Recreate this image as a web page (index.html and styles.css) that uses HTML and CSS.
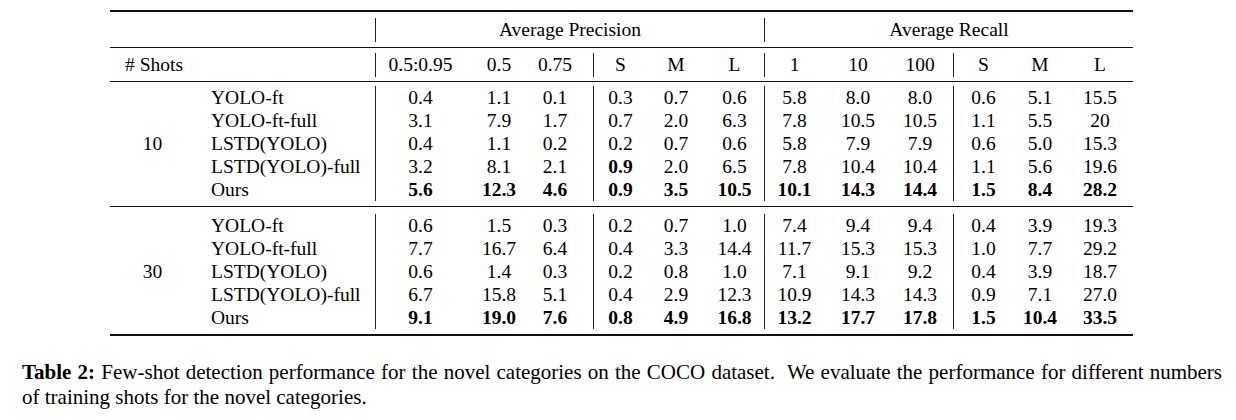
FILE: index.html
```html
<!DOCTYPE html>
<html>
<head>
<meta charset="utf-8">
<link rel="stylesheet" href="styles.css">
</head>
<body>
<table class="tbl">
  <colgroup>
    <col class="w-shot"><col class="w-meth">
    <col class="w90"><col class="w68"><col class="w60">
    <col class="w54"><col class="w58"><col class="w59">
    <col class="w60"><col class="w68"><col class="w61">
    <col class="w60"><col class="w54"><col class="w66">
  </colgroup>
  <tr class="rule thick"><td colspan="14"></td></tr>
  <tr class="sp s6"><td colspan="14"></td></tr>
  <tr class="head">
    <td colspan="2"></td>
    <td colspan="6" class="vl">Average Precision</td>
    <td colspan="6" class="vl">Average Recall</td>
  </tr>
  <tr class="sp s5"><td colspan="14"></td></tr>
  <tr class="rule"><td colspan="14"></td></tr>
  <tr class="sp s5"><td colspan="14"></td></tr>
  <tr class="head">
    <td colspan="2" class="shots">#&nbsp;Shots</td>
    <td class="vl">0.5:0.95</td><td>0.5</td><td class="pr16">0.75</td>
    <td class="vl">S</td><td>M</td><td>L</td>
    <td class="vl">1</td><td>10</td><td class="pr5">100</td>
    <td class="vl">S</td><td>M</td><td>L</td>
  </tr>
  <tr class="sp s4"><td colspan="14"></td></tr>
  <tr class="rule"><td colspan="14"></td></tr>
  <tr class="sp s4"><td colspan="14"></td></tr>

  <tr class="row">
    <td rowspan="5" class="n">10</td><td class="m">YOLO-ft</td>
    <td class="vl">0.4</td><td>1.1</td><td class="pr16">0.1</td>
    <td class="vl">0.3</td><td>0.7</td><td>0.6</td>
    <td class="vl">5.8</td><td>8.0</td><td class="pr5">8.0</td>
    <td class="vl">0.6</td><td>5.1</td><td>15.5</td>
  </tr>
  <tr class="row">
    <td class="m">YOLO-ft-full</td>
    <td class="vl">3.1</td><td>7.9</td><td class="pr16">1.7</td>
    <td class="vl">0.7</td><td>2.0</td><td>6.3</td>
    <td class="vl">7.8</td><td>10.5</td><td class="pr5">10.5</td>
    <td class="vl">1.1</td><td>5.5</td><td>20</td>
  </tr>
  <tr class="row">
    <td class="m">LSTD(YOLO)</td>
    <td class="vl">0.4</td><td>1.1</td><td class="pr16">0.2</td>
    <td class="vl">0.2</td><td>0.7</td><td>0.6</td>
    <td class="vl">5.8</td><td>7.9</td><td class="pr5">7.9</td>
    <td class="vl">0.6</td><td>5.0</td><td>15.3</td>
  </tr>
  <tr class="row">
    <td class="m">LSTD(YOLO)-full</td>
    <td class="vl">3.2</td><td>8.1</td><td class="pr16">2.1</td>
    <td class="vl b">0.9</td><td>2.0</td><td>6.5</td>
    <td class="vl">7.8</td><td>10.4</td><td class="pr5">10.4</td>
    <td class="vl">1.1</td><td>5.6</td><td>19.6</td>
  </tr>
  <tr class="row best">
    <td class="m">Ours</td>
    <td class="vl">5.6</td><td>12.3</td><td class="pr16">4.6</td>
    <td class="vl">0.9</td><td>3.5</td><td>10.5</td>
    <td class="vl">10.1</td><td>14.3</td><td class="pr5">14.4</td>
    <td class="vl">1.5</td><td>8.4</td><td>28.2</td>
  </tr>

  <tr class="sp s5"><td colspan="14"></td></tr>
  <tr class="rule"><td colspan="14"></td></tr>
  <tr class="sp s7"><td colspan="14"></td></tr>

  <tr class="row">
    <td rowspan="5" class="n">30</td><td class="m">YOLO-ft</td>
    <td class="vl">0.6</td><td>1.5</td><td class="pr16">0.3</td>
    <td class="vl">0.2</td><td>0.7</td><td>1.0</td>
    <td class="vl">7.4</td><td>9.4</td><td class="pr5">9.4</td>
    <td class="vl">0.4</td><td>3.9</td><td>19.3</td>
  </tr>
  <tr class="row">
    <td class="m">YOLO-ft-full</td>
    <td class="vl">7.7</td><td>16.7</td><td class="pr16">6.4</td>
    <td class="vl">0.4</td><td>3.3</td><td>14.4</td>
    <td class="vl">11.7</td><td>15.3</td><td class="pr5">15.3</td>
    <td class="vl">1.0</td><td>7.7</td><td>29.2</td>
  </tr>
  <tr class="row">
    <td class="m">LSTD(YOLO)</td>
    <td class="vl">0.6</td><td>1.4</td><td class="pr16">0.3</td>
    <td class="vl">0.2</td><td>0.8</td><td>1.0</td>
    <td class="vl">7.1</td><td>9.1</td><td class="pr5">9.2</td>
    <td class="vl">0.4</td><td>3.9</td><td>18.7</td>
  </tr>
  <tr class="row">
    <td class="m">LSTD(YOLO)-full</td>
    <td class="vl">6.7</td><td>15.8</td><td class="pr16">5.1</td>
    <td class="vl">0.4</td><td>2.9</td><td>12.3</td>
    <td class="vl">10.9</td><td>14.3</td><td class="pr5">14.3</td>
    <td class="vl">0.9</td><td>7.1</td><td>27.0</td>
  </tr>
  <tr class="row best">
    <td class="m">Ours</td>
    <td class="vl">9.1</td><td>19.0</td><td class="pr16">7.6</td>
    <td class="vl">0.8</td><td>4.9</td><td>16.8</td>
    <td class="vl">13.2</td><td>17.7</td><td class="pr5">17.8</td>
    <td class="vl">1.5</td><td>10.4</td><td>33.5</td>
  </tr>

  <tr class="sp s5"><td colspan="14"></td></tr>
  <tr class="rule thick"><td colspan="14"></td></tr>
</table>

<p class="caption"><b>Table 2:</b> Few-shot detection performance for the novel categories on the COCO dataset.&nbsp; We evaluate the performance for different numbers of training shots for the novel categories.</p>
</body>
</html>
```

FILE: styles.css
```css
html, body {
  margin: 0;
  padding: 0;
  background: #ffffff;
}

body {
  font-family: "Liberation Serif", "Times New Roman", serif;
  color: #000000;
}

.tbl {
  margin: 10px 0 0 110px;
  width: 1023px;
  table-layout: fixed;
  border-collapse: separate;
  border-spacing: 0;
  font-family: "Liberation Serif", "Times New Roman", serif;
  font-size: 19.5px;
}

.tbl td {
  padding: 0;
  text-align: center;
  vertical-align: middle;
  white-space: nowrap;
  box-sizing: border-box;
}

.w-shot { width: 85px; }
.w-meth { width: 180px; }
.w90 { width: 90px; }
.w68 { width: 68px; }
.w66 { width: 66px; }
.w61 { width: 61px; }
.w60 { width: 60px; }
.w59 { width: 59px; }
.w58 { width: 58px; }
.w54 { width: 54px; }

.rule td {
  height: 1px;
  background: #111111;
}

.rule.thick td {
  height: 2px;
}

.sp td { height: 5px; }
.sp.s4 td { height: 4px; }
.sp.s5 td { height: 5px; }
.sp.s6 td { height: 6px; }
.sp.s7 td { height: 7px; }

.head td {
  height: 24px;
  line-height: 24px;
}

.row td {
  height: 23px;
  line-height: 23px;
}

.tbl td.vl {
  border-left: 1px solid #222222;
}

.tbl td.shots {
  text-align: left;
  padding-left: 15px;
}

.tbl td.m {
  text-align: left;
  padding-left: 16px;
}

.tbl td.pr16 { padding-right: 16px; }
.tbl td.pr5 { padding-right: 5px; }

.b,
.best td:not(.m) {
  font-weight: bold;
}

.caption {
  width: 1200px;
  margin: 24px 0 0 22px;
  font-size: 21px;
  line-height: 25px;
  text-align: justify;
}
```
